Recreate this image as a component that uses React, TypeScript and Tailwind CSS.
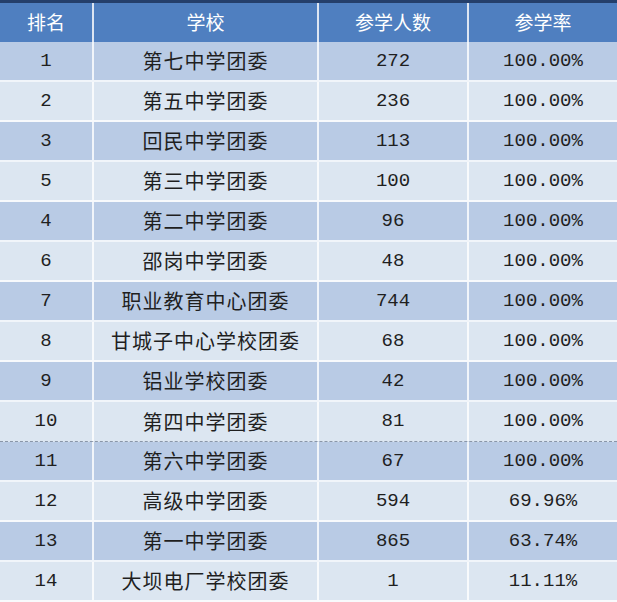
const rows: [string, string, string, string][] = [
  ['1', '第七中学团委', '272', '100.00%'],
  ['2', '第五中学团委', '236', '100.00%'],
  ['3', '回民中学团委', '113', '100.00%'],
  ['5', '第三中学团委', '100', '100.00%'],
  ['4', '第二中学团委', '96', '100.00%'],
  ['6', '邵岗中学团委', '48', '100.00%'],
  ['7', '职业教育中心团委', '744', '100.00%'],
  ['8', '甘城子中心学校团委', '68', '100.00%'],
  ['9', '铝业学校团委', '42', '100.00%'],
  ['10', '第四中学团委', '81', '100.00%'],
  ['11', '第六中学团委', '67', '100.00%'],
  ['12', '高级中学团委', '594', '69.96%'],
  ['13', '第一中学团委', '865', '63.74%'],
  ['14', '大坝电厂学校团委', '1', '11.11%'],
];

const cols = 'grid grid-cols-[94px_225px_150px_1fr]';
const num = "font-['Liberation_Mono',monospace] text-[19px] text-[#1f1f1f]";
const cjk = "font-['Noto_Sans_CJK_SC','Noto_Sans',sans-serif] text-[20px] tracking-[1px] text-[#1f1f1f]";

export default function App() {
  return (
    <div className="h-[602px] w-[617px] overflow-hidden bg-[#dce6f1]">
      <div
        className={`${cols} h-[42px] border-t-[3px] border-[#243f6b] bg-[#4f7fc0] font-['Noto_Sans_CJK_SC',sans-serif] text-[19px] text-white`}
      >
        <div className="flex items-center justify-center border-r-2 border-white/80">排名</div>
        <div className="flex items-center justify-center border-r-2 border-white/80">学校</div>
        <div className="flex items-center justify-center border-r-2 border-white/80">参学人数</div>
        <div className="flex items-center justify-center">参学率</div>
      </div>
      {rows.map((r, i) => (
        <div
          key={r[0]}
          className={`${cols} h-[40px] ${i % 2 === 0 ? 'bg-[#b9cbe5]' : 'bg-[#dce6f1]'} ${
            i === 9 ? 'border-b border-dashed border-[#8a96a8]' : 'border-b-2 border-white/80'
          }`}
        >
          <div className={`flex items-center justify-center border-r-2 border-white/80 ${num}`}>{r[0]}</div>
          <div className={`flex items-center justify-center border-r-2 border-white/80 ${cjk}`}>{r[1]}</div>
          <div className={`flex items-center justify-center border-r-2 border-white/80 ${num}`}>{r[2]}</div>
          <div className={`flex items-center justify-center ${num}`}>{r[3]}</div>
        </div>
      ))}
    </div>
  );
}
